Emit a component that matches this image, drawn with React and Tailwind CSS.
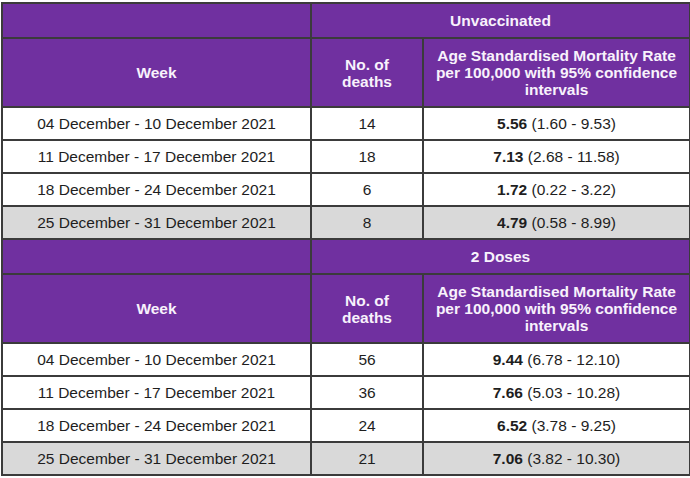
import React from 'react';

const sections = [
  {
    title: 'Unvaccinated',
    rows: [
      ['04 December - 10 December 2021', '14', '5.56', '(1.60 - 9.53)'],
      ['11 December - 17 December 2021', '18', '7.13', '(2.68 - 11.58)'],
      ['18 December - 24 December 2021', '6', '1.72', '(0.22 - 3.22)'],
      ['25 December - 31 December 2021', '8', '4.79', '(0.58 - 8.99)'],
    ],
  },
  {
    title: '2 Doses',
    rows: [
      ['04 December - 10 December 2021', '56', '9.44', '(6.78 - 12.10)'],
      ['11 December - 17 December 2021', '36', '7.66', '(5.03 - 10.28)'],
      ['18 December - 24 December 2021', '24', '6.52', '(3.78 - 9.25)'],
      ['25 December - 31 December 2021', '21', '7.06', '(3.82 - 10.30)'],
    ],
  },
];

const cell = 'border-2 border-[#3b3b3b] text-center align-middle';
const head = cell + ' bg-[#7030a0] text-[#f8f2fc] font-bold text-[15.5px] leading-[17px]';

function Section({ title, rows }) {
  return (
    <>
      <tr className="h-[35px]">
        <td className={head}></td>
        <td className={head} colSpan={2}>{title}</td>
      </tr>
      <tr className="h-[69px]">
        <td className={head}>Week</td>
        <td className={head}>No. of<br />deaths</td>
        <td className={head + ' px-1'}>
          Age Standardised Mortality Rate per 100,000 with 95% confidence intervals
        </td>
      </tr>
      {rows.map((r, i) => {
        const bg = i === rows.length - 1 ? 'bg-[#d9d9d9]' : 'bg-white';
        return (
          <tr key={i} className={'h-[33px] ' + bg}>
            <td className={cell}>{r[0]}</td>
            <td className={cell}>{r[1]}</td>
            <td className={cell}>
              <span className="font-bold">{r[2]}</span> {r[3]}
            </td>
          </tr>
        );
      })}
    </>
  );
}

export default function App() {
  return (
    <div className="w-[690px] h-[478px] bg-white pl-[1px] pt-[2px] overflow-hidden" style={{ fontFamily: '"Liberation Sans", Arial, sans-serif' }}>
      <table className="border-collapse text-[15.5px] text-[#1e1e1e] table-fixed w-[688px]">
        <colgroup>
          <col className="w-[309px]" />
          <col className="w-[112px]" />
          <col className="w-[267px]" />
        </colgroup>
        <tbody>
          {sections.map((s) => (
            <Section key={s.title} {...s} />
          ))}
        </tbody>
      </table>
    </div>
  );
}
